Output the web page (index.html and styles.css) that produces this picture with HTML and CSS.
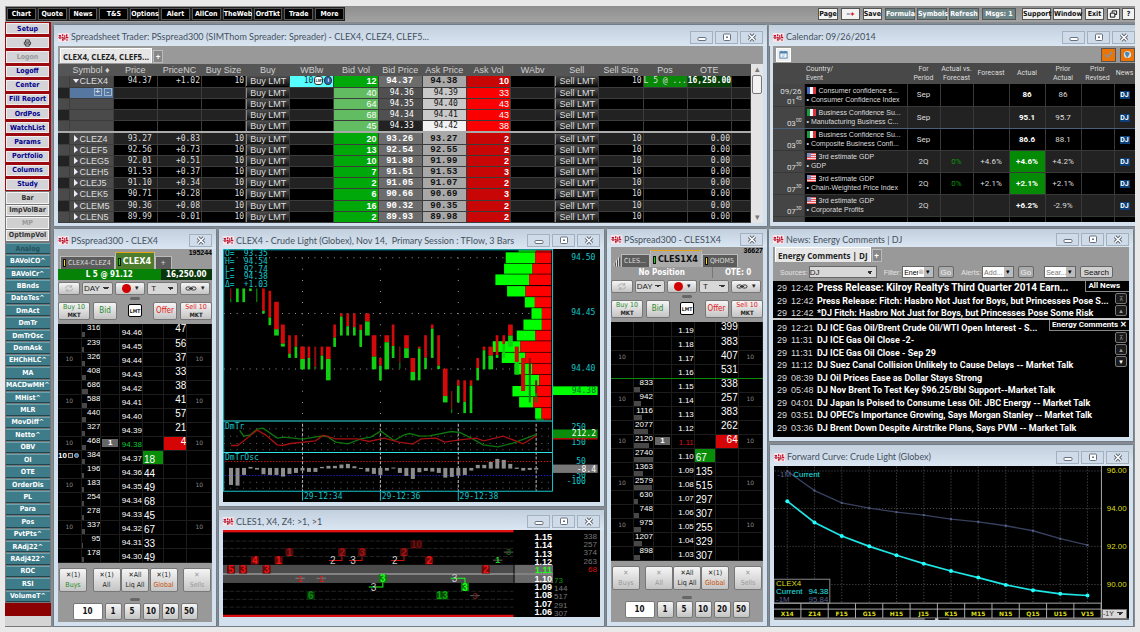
FILE: index.html
```html
<!DOCTYPE html>
<html lang="en">
<head>
  <meta charset="UTF-8">
  <meta name="viewport" content="width=device-width, initial-scale=1.0">
  <title>Trading Desktop</title>
  <link rel="stylesheet" href="styles.css">
</head>
<body>

<!-- Shared icons -->
<svg class="defs" width="0" height="0" aria-hidden="true">
  <symbol id="logo" viewBox="0 0 33 27">
    <rect width="33" height="27" fill="#f4e4e8"/>
    <path fill="#c8102e" d="M2 6h7v4H2zM1 13h9v4H3v-2H1zM12 4h4v5h-4zM11 11h5v4h-5zM12 18h5v5h-5zM18 7h4v4h-4zM17 13h6v4h-6zM24 4h4v6h-4zM24 12h7v4h-7zM25 19h4v4h-4z"/>
    <path fill="#7d0a1e" d="M4 9h4v2H4zM13 14h4v3h-4zM19 17h3v3h-3zM25 9h3v2h-3z"/>
  </symbol>
  <symbol id="min" viewBox="0 0 12 9"><rect x="2" y="4.500" width="8" height="3" rx="1" fill="#fff" stroke="#66717d"/></symbol>
  <symbol id="max" viewBox="0 0 12 9"><rect x="2.500" y="1" width="7" height="6.500" rx="1" fill="#fff" stroke="#66717d"/><rect x="5" y="3.500" width="2" height="1.500" fill="#66717d"/></symbol>
  <symbol id="close" viewBox="0 0 12 9"><path d="M3 1.500 9 7.500M9 1.500 3 7.500" stroke="#5d6874" stroke-width="3.400"/><path d="M3 1.500 9 7.500M9 1.500 3 7.500" stroke="#fff" stroke-width="1.500"/></symbol>
  <symbol id="link" viewBox="0 0 12 6"><rect x="1" y="1.500" width="5" height="3" rx="1.500" fill="none" stroke="#333"/><rect x="6" y="1.500" width="5" height="3" rx="1.500" fill="none" stroke="#333"/><path d="M4 3h4" stroke="#333"/></symbol>
  <symbol id="cycle" viewBox="0 0 12 10"><path d="M2 5a4 3 0 0 1 7-2M10 5a4 3 0 0 1-7 2M9 1v2.500H6.500M3 9V6.500h2.500" fill="none" stroke="#aaa"/></symbol>
</svg>

<div class="app">
  <header class="toolbar">
    <nav class="menu">
      <button>Chart</button><button>Quote</button><button>News</button><button>T&amp;S</button><button>Options</button><button>Alert</button><button>AllCon</button><button>TheWeb</button><button>OrdTkt</button><button>Trade</button><button>More</button>
    </nav>
    <div class="actions">
      <button>Page</button>
      <button class="page-nav" aria-label="Next page"><svg viewBox="0 0 12 6"><path d="M1 3h4" stroke="#228"/><path d="M6 3h5M8.500 1v4" stroke="#c11" stroke-width="1.500"/></svg></button>
      <button>Save</button>
      <span class="group"><button class="teal">Formula</button><button class="teal">Symbols</button><button class="teal">Refresh</button></span>
      <button class="teal msgs">Msgs: 1</button>
      <span class="group wide"><button>Support</button><button>Window</button></span>
      <button>Exit</button>
      <span class="group"><button class="sq" aria-label="Restore"><svg viewBox="0 0 9 9"><path d="M3 3V1h5v4H6M1 3.500h5V8H1z" fill="none" stroke="#000"/></svg></button><button class="sq">?</button></span>
    </div>
  </header>

  <div class="main">
    <aside class="sidebar">
      <div class="side-red">
        <button>Setup</button>
        <button aria-label="Print"><svg viewBox="0 0 10 9"><path d="M3 3.500V1h4v2.500M3 6H1.500V3.500h7V6H7M3 5.500h4V8H3z" fill="none" stroke="#333"/></svg></button>
        <button disabled>Logon</button>
        <button>Logoff</button>
        <button>Center</button>
        <button>Fill Report</button>
        <button>OrdPos</button>
        <button>WatchList</button>
        <button>Params</button>
        <button>Portfolio</button>
        <button>Columns</button>
        <button>Study</button>
      </div>
      <div class="side-gray">
        <button>Bar</button>
        <button>ImpVolBar</button>
        <button disabled>MP</button>
        <button>OptImpVol</button>
      </div>
      <div class="side-teal" id="studies"></div>
      <div class="side-end"></div>
    </aside>

    <div class="desk">
      <div class="desk-left">
        <section class="win sheet-win">
          <div class="title"><svg class="logo"><use href="#logo"/></svg><h2>Spreadsheet Trader: PSspread300 (SIMThom Spreader: Spreader) - CLEX4, CLEZ4, CLEF5...</h2><div class="ctl"><button aria-label="Minimize"><svg><use href="#min"/></svg></button><button aria-label="Maximize"><svg><use href="#max"/></svg></button><button aria-label="Close"><svg><use href="#close"/></svg></button></div></div>
          <div class="body">
            <div class="tabs"><button class="tab on">CLEX4, CLEZ4, CLEF5...</button><button class="plus">+</button></div>
            <div class="sheet-wrap">
              <table class="sheet">
                <colgroup><col class="c-gut"><col span="15"><col class="c-end"></colgroup>
                <thead><tr><th></th><th>Symbol ♦</th><th>Price</th><th>PriceNC</th><th>Buy Size</th><th>Buy</th><th>WBlw</th><th>Bid Vol</th><th>Bid Price</th><th>Ask Price</th><th>Ask Vol</th><th>WAbv</th><th>Sell</th><th>Sell Size</th><th>Pos</th><th>OTE</th><th></th></tr></thead>
                <tbody id="sheetRows"></tbody>
              </table>
              <div class="scroll"><span>▴</span><i></i><span>▾</span></div>
            </div>
          </div>
        </section>

        <div class="lower">
          <section class="win ladder-win" id="ladder1">
            <div class="title"><svg class="logo"><use href="#logo"/></svg><h2>PSspread300 - CLEX4</h2><div class="ctl"><button aria-label="Close"><svg><use href="#close"/></svg></button></div></div>
            <div class="body">
              <div class="ltabs">
                <button class="ltab"><i class="mark yellow"></i>CLEX4-CLEZ4</button>
                <button class="ltab on"><i class="mark green"></i>CLEX4</button>
                <button class="ltab add">+</button>
                <span class="count">195244</span>
              </div>
              <div class="pos long"><span>L 5 @ 91.12</span><span>16,250.00</span></div>
              <div class="controls"></div>
            </div>
          </section>

          <div class="mid">
            <section class="win chart-win">
              <div class="title"><svg class="logo"><use href="#logo"/></svg><h2>CLEX4 - Crude Light (Globex), Nov 14,&nbsp; Primary Session : TFlow, 3 Bars</h2><div class="ctl"><button aria-label="Minimize"><svg><use href="#min"/></svg></button><button aria-label="Maximize"><svg><use href="#max"/></svg></button><button aria-label="Close"><svg><use href="#close"/></svg></button></div></div>
              <div class="body"><svg class="plot" id="barChart" viewBox="18 62 1128 758"></svg></div>
            </section>
            <section class="win tape-win">
              <div class="title"><svg class="logo"><use href="#logo"/></svg><h2>CLES1, X4, Z4: &gt;1, &gt;1</h2><div class="ctl"><button aria-label="Minimize"><svg><use href="#min"/></svg></button><button aria-label="Maximize"><svg><use href="#max"/></svg></button><button aria-label="Close"><svg><use href="#close"/></svg></button></div></div>
              <div class="body"><svg class="plot" id="tape" viewBox="18 70 1125 260"></svg></div>
            </section>
          </div>

          <section class="win ladder-win compact" id="ladder2">
            <div class="title"><svg class="logo"><use href="#logo"/></svg><h2>PSspread300 - CLES1X4</h2><div class="ctl"><button aria-label="Close"><svg><use href="#close"/></svg></button></div></div>
            <div class="body">
              <div class="ltabs">
                <svg class="steps" viewBox="0 0 9 12"><path d="M1.500 12V8M4 12V5M6.500 12V2" stroke="#fff"/><path d="M2.500 12V8M5 12V5M7.500 12V2" stroke="#333"/></svg>
                <button class="ltab">CLES...</button>
                <button class="ltab on gray"><i class="mark green"></i>CLES1X4</button>
                <button class="ltab"><i class="mark yellow"></i>QHOM5</button>
                <span class="count">36627</span>
              </div>
              <div class="pos flat"><span>No Position</span><span>OTE: 0</span></div>
              <div class="controls"></div>
            </div>
          </section>
        </div>
      </div>

      <div class="desk-right">
        <section class="win cal-win">
          <div class="title"><svg class="logo"><use href="#logo"/></svg><h2>Calendar: 09/26/2014</h2><div class="ctl"><button aria-label="Minimize"><svg><use href="#min"/></svg></button><button aria-label="Maximize"><svg><use href="#max"/></svg></button><button aria-label="Close"><svg><use href="#close"/></svg></button></div></div>
          <div class="body">
            <div class="cal-bar">
              <button aria-label="Pick date"><svg viewBox="0 0 10 10"><rect x="1" y="2" width="8" height="7" fill="#fff" stroke="#4a7fae"/><path d="M1 3h8M3 1v1M7 1v1" stroke="#4a7fae" stroke-width="2"/><path d="M3 5.500h4M3 7.500h3" stroke="#8fb2cf"/></svg></button>
              <button class="orange push" aria-label="Importance"><svg viewBox="0 0 10 10"><path d="M1 5l3 3 5-6" fill="none" stroke="#8a9098" stroke-width="2"/></svg></button>
              <button class="orange" aria-label="Countries"><svg viewBox="0 0 10 10"><circle cx="5" cy="5" r="4" fill="#cfe3f2"/><path d="M3 2c3 0 5 1 4 3s-2 2-2 4C4 7 1 5 3 2z" fill="#4f86ad"/></svg></button>
            </div>
            <table class="cal">
              <colgroup><col class="k-time"><col class="k-event"><col class="k-33"><col class="k-33"><col class="k-36"><col class="k-36"><col class="k-36"><col class="k-33"><col class="k-news"></colgroup>
              <thead><tr><th></th><th class="left">Country/<br>Event</th><th>For<br>Period</th><th>Actual vs.<br>Forecast</th><th>Forecast</th><th>Actual</th><th>Prior<br>Actual</th><th>Prior<br>Revised</th><th>News</th></tr></thead>
              <tbody id="calRows"></tbody>
            </table>
          </div>
        </section>

        <section class="win news-win">
          <div class="title"><svg class="logo"><use href="#logo"/></svg><h2>News: Energy Comments | DJ</h2><div class="ctl"><button aria-label="Minimize"><svg><use href="#min"/></svg></button><button aria-label="Maximize"><svg><use href="#max"/></svg></button><button aria-label="Close"><svg><use href="#close"/></svg></button></div></div>
          <div class="body">
            <div class="tabs"><button class="tab on">Energy Comments | DJ</button><button class="plus">+</button></div>
            <div class="news-bar">
              <label for="src">Sources:</label><select id="src" class="w-src"><option>DJ</option></select>
              <label for="filter" class="sp">Filter:</label><span class="combo"><input id="filter" value="Ener"><em>⊗</em><button aria-label="Filter list">▾</button></span><button class="dim">Go</button>
              <label for="alerts" class="sp">Alerts:</label><span class="combo"><input id="alerts" placeholder="Add..."><button aria-label="Alert list">▾</button></span><button class="dim">Go</button>
              <span class="combo srch"><input aria-label="Search text" placeholder="Sear..."><button aria-label="Search list">▾</button></span><button>Search</button>
            </div>
            <div class="news-list top"><div id="newsTop"></div><b class="tag">All News</b><div class="jump"><button>⊼</button><button>▲</button></div></div>
            <div class="news-list all"><div id="newsAll"></div><b class="tag">Energy Comments ✕</b><div class="jump"><button>⊼</button><button>▲</button><button class="lit">▼</button></div></div>
          </div>
        </section>

        <section class="win fwd-win">
          <div class="title"><svg class="logo"><use href="#logo"/></svg><h2>Forward Curve: Crude Light (Globex)</h2><div class="ctl"><button aria-label="Minimize"><svg><use href="#min"/></svg></button><button aria-label="Maximize"><svg><use href="#max"/></svg></button><button aria-label="Close"><svg><use href="#close"/></svg></button></div></div>
          <div class="body"><svg class="plot" id="forward" viewBox="26 76 1069 463"></svg><select class="span-pick" aria-label="Compare"><option>-1Y</option></select></div>
        </section>
      </div>
    </div>
  </div>
</div>

<script src="app.js"></script>
</body>
</html>
```
FILE: styles.css
```css
* {
  box-sizing: border-box;
}
body {
  margin: 0;
  padding: 6px 5px;
  background: #e9e9e9;
  font-family: "Liberation Sans", Arial, sans-serif;
  font-size: 9px;
  color: #ddd;
}
button, input, select {
  font: inherit;
  margin: 0;
  padding: 0;
  border-radius: 0;
  cursor: pointer;
}
table {
  border-collapse: collapse;
  table-layout: fixed;
  width: 100%;
}
td, th {
  padding: 0;
  font-weight: normal;
  white-space: nowrap;
  overflow: hidden;
}
.defs {
  position: absolute;
}
.app {
  overflow: hidden;
  background: #9b9b9b;
}

/* top toolbar */
.toolbar {
  display: flex;
  justify-content: space-between;
  align-items: center;
  height: 16px;
  padding-left: 2px;
  background: linear-gradient(#8f8f8f, #a2a2a2);
  font: bold 7px "DejaVu Sans Condensed", "DejaVu Sans", sans-serif;
}
.menu {
  display: flex;
  gap: 2px;
  width: 337px;
}
.menu button {
  flex: 1 1 0;
  min-width: 0;
  height: 12px;
  border: 1px solid #555;
  outline: 1px solid #222;
  background: #000;
  color: #fff;
}
.actions {
  display: flex;
  gap: 3px;
}
.actions .group {
  display: flex;
  gap: 2px;
}
.actions button {
  min-width: 19px;
  height: 12px;
  border: 1px solid #555;
  background: #f2f2f2;
  color: #111;
}
.actions .teal {
  width: 30px;
  background: #6d8486;
  color: #fff;
}
.actions .msgs {
  width: 34px;
  margin-right: 3px;
}
.actions .wide button {
  width: 29px;
}
.actions .sq {
  min-width: 13px;
}
.actions svg {
  display: block;
  width: 9px;
  height: 8px;
  margin: auto;
}

.main {
  display: flex;
}

/* study / command buttons */
.sidebar {
  flex: none;
  width: 46px;
  background: #777;
  font: bold 7px "DejaVu Sans Condensed", "DejaVu Sans", sans-serif;
}
.sidebar button {
  width: 100%;
  min-height: 0;
  line-height: 8px;
  white-space: nowrap;
}
.sidebar svg {
  display: block;
  height: 8px;
  margin: auto;
}
.side-red, .side-gray, .side-teal {
  display: grid;
  grid-auto-rows: minmax(0, 1fr);
  padding: 1px 2px 1px 1px;
}
.side-red {
  gap: 3px;
  height: 169px;
  background: #9c0a0f;
}
.side-red button {
  border: 1px solid #eee;
  background: #d3d3d8;
  color: #00008b;
}
.side-gray {
  gap: 1px;
  height: 51px;
}
.side-gray button {
  border: 1px solid #f4f4f4;
  background: #d0d0d0;
  color: #333;
}
.sidebar button:disabled {
  color: #999;
  cursor: default;
}
.side-teal {
  gap: 1px;
  height: 361px;
}
.side-teal button {
  border: 1px solid #6ba3af;
  border-width: 1px 0;
  border-bottom-color: #1f4650;
  background: #3e7c8a;
  color: #fff;
}
.side-teal button:disabled {
  color: #24505b;
}
.side-end {
  height: 23px;
  border-bottom: 10px solid #d4d4d4;
  background: #8b0000;
}

/* desktop and windows */
.desk {
  flex: 1;
  display: grid;
  grid-template-columns: minmax(0, 715fr) minmax(0, 366fr);
  gap: 1px;
  padding: 2px 0 0 2px;
  overflow: hidden;
  background: #858b90;
}
.desk-left, .desk-right, .mid {
  display: flex;
  flex-direction: column;
  min-width: 0;
}
.lower {
  flex: 1;
  display: grid;
  grid-template-columns: 164px minmax(0, 1fr) 162px;
  gap: 1px;
  margin-top: 1px;
}
.mid {
  gap: 2px;
}
.win {
  display: flex;
  flex-direction: column;
  min-width: 0;
  padding: 0 4px 4px;
  border: 1px solid #737d87;
  border-radius: 3px 3px 0 0;
  background: #d3e0ee;
}
.title {
  display: flex;
  align-items: center;
  gap: 2px;
  flex: none;
  height: 21px;
  margin: 0 -4px;
  padding: 3px 4px 0;
  background: linear-gradient(#c2cfdd, #dae6f2);
}
.ladder-win .title, .chart-win .title, .tape-win .title {
  height: 20px;
}
.compact .title {
  height: 18px;
}
.title .logo {
  flex: none;
  width: 11px;
  height: 9px;
}
.title h2 {
  flex: 1;
  margin: 0;
  overflow: hidden;
  font: 9px Lato, sans-serif;
  line-height: 12px;
  color: #44505e;
  white-space: nowrap;
}
.ctl {
  display: flex;
  gap: 2px;
}
.ctl button {
  width: 23px;
  height: 13px;
  border: 1px solid #a3b0be;
  background: #cfdbe8;
}
.ctl svg {
  display: block;
  width: 12px;
  height: 9px;
  margin: auto;
}
.body {
  flex: 1;
  min-height: 0;
  background: #999;
}
.plot {
  display: block;
  width: 100%;
  background: #000;
}

.tabs {
  display: flex;
  align-items: flex-end;
  height: 18px;
  padding: 0 0 1px 2px;
  font: bold 8px "Open Sans", sans-serif;
}
.tabs .tab {
  height: 15px;
  padding: 0 2px;
  border: 1px solid #fff;
  border-bottom: 0;
  background: #e6e6e6;
  color: #222;
}
.tabs .plus {
  width: 10px;
  height: 13px;
  margin-left: 1px;
  border: 1px solid #bbb;
  background: #888;
  color: #fff;
}

/* spreadsheet */
.sheet-win {
  height: 203px;
}
.sheet-wrap {
  display: flex;
}
.sheet {
  height: 159px;
  background: #000;
}
.c-gut {
  width: 11px;
}
.c-end {
  width: 19px;
}
.sheet th {
  height: 12px;
  background: #555;
  color: #d0d0d0;
}
.sheet td {
  height: 11px;
  padding-right: 1px;
  border: 1px solid #3c3c3c;
  border-width: 0 1px 1px 0;
  font: 8px "DejaVu Sans Mono", monospace;
  line-height: 10px;
  text-align: right;
}
.sheet tr:nth-child(even) td {
  background: #222;
}
.sheet tr.last td {
  border-bottom: 2px solid #aaa;
}
.sheet td.gut, .sheet tr td.sym {
  background: #4a4a4a;
}
.sheet td.sym {
  padding-left: 3px;
  font: 9px "Liberation Sans", sans-serif;
  line-height: 10px;
  text-align: left;
}
.sym svg {
  width: 6px;
  height: 7px;
  margin-right: 1px;
}
.sheet tr td.pick {
  background: #56779f;
  text-align: right;
}
.pick b {
  display: inline-block;
  width: 8px;
  margin-left: 2px;
  border: 1px solid #9db7d3;
  font-size: 8px;
  line-height: 6px;
  text-align: center;
  vertical-align: top;
}
.sheet td.act {
  padding: 0;
}
.act button {
  display: block;
  width: 100%;
  height: 10px;
  border: 0;
  border-left: 1px solid #888;
  background: linear-gradient(#4d4d4d, #111);
  color: #ddd;
  font: 9px "Liberation Sans", sans-serif;
  line-height: 10px;
}
.sheet tr td.work {
  background: #5ff;
  color: #134;
}
.work i {
  display: inline-block;
  width: 9px;
  height: 9px;
  margin-left: 1px;
  border: 1px solid #333;
  border-radius: 3px;
  background: #fff;
  font: bold 4px "Liberation Sans", sans-serif;
  line-height: 7px;
  text-align: center;
  vertical-align: top;
}
.work i + i {
  width: 8px;
  border-radius: 50%;
  background: #2a66ad;
  color: #fff;
  font-size: 6px;
}
.sheet tr td.bv, .sheet tr td.av {
  background: #00a80a;
  color: #fff;
  font: bold 9px "Liberation Sans", sans-serif;
  line-height: 10px;
}
.sheet tr td.av {
  background: #c80606;
}
.sheet tr.depth td.bv {
  background: #62bd62;
  font-weight: normal;
}
.sheet tr.depth td.av {
  background: #fa0000;
  font-weight: normal;
}
.sheet tr td.bp, .sheet tr td.ap {
  background: #6c6c6c;
  color: #fff;
  font: bold 9px "Liberation Mono", monospace;
  line-height: 10px;
  text-align: center;
}
.sheet tr td.ap {
  background: #a8a8a8;
  color: #111;
}
.sheet tr.depth td.bp, .sheet tr.depth td.ap {
  padding-left: 4px;
  font: 8px "DejaVu Sans Mono", monospace;
  line-height: 10px;
}
.sheet tr.depth td.ap {
  background: #c9c9c9;
}
.sheet tr.last td.ap {
  background: #f2f2f2;
}
.sheet tr.depth td.bp {
  background: #505050;
}
.sheet tr.last td.bp {
  background: #222;
}
.sheet tr td.plong {
  padding: 0;
  background: #078807;
  text-align: left;
}
.sheet tr td.gain {
  padding: 0;
  background: #064006;
  color: #fff;
  font-weight: bold;
}
.sheet td.price {
  padding-right: 5px;
}
.scroll {
  display: flex;
  flex-direction: column;
  align-items: center;
  flex: none;
  width: 12px;
  background: #e4e4e4;
  color: #777;
  line-height: 11px;
}
.scroll i {
  width: 10px;
  height: 19px;
  border: 1px solid #777;
  border-radius: 2px;
  background: #f2f2f2;
}
.scroll span:last-child {
  margin-top: auto;
}

/* price ladders */
.ltabs {
  display: flex;
  align-items: flex-end;
  height: 20px;
  padding-left: 2px;
  font: 8px "DejaVu Sans Condensed", "DejaVu Sans", sans-serif;
}
.ltab {
  height: 13px;
  padding: 0 3px 0 2px;
  border: 1px solid #bbb;
  border-bottom: 0;
  background: #5c5c5c;
  color: #ddd;
  font-size: 7px;
  white-space: nowrap;
}
.ltab.add {
  width: 17px;
}
.ltab.on {
  height: 17px;
  border-top: 1px solid #e6a317;
  background: #4c7c2c;
  color: #fff;
  font-size: 9px;
  font-weight: bold;
}
.ltab.on.gray {
  background: #ababab;
  color: #111;
}
.mark {
  display: inline-block;
  width: 3px;
  height: 8px;
  margin-right: 2px;
  border: 1px solid #111;
  background: #fd0;
  vertical-align: middle;
}
.mark.green {
  background: #0d0;
}
.steps {
  width: 8px;
  height: 12px;
}
.count {
  align-self: flex-start;
  flex: 1;
  color: #000;
  font: bold 7px "Liberation Sans", sans-serif;
  text-align: right;
}
.pos {
  display: grid;
  grid-template-columns: 2fr 1fr;
  height: 11px;
  color: #fff;
  font: bold 8px "DejaVu Sans Condensed", "DejaVu Sans", sans-serif;
  line-height: 11px;
  text-align: center;
  white-space: nowrap;
}
.pos.long span {
  background: #068206;
}
.pos.long span + span {
  background: #0b360b;
}
.pos.flat span + span {
  border-left: 1px solid #777;
}
.tools, .orders, .cancels, .sizes {
  display: flex;
  align-items: center;
}
.tools {
  gap: 2px;
  height: 16px;
}
.controls button, .controls select, .controls input {
  border: 1px solid #777;
  border-radius: 2px;
  background: linear-gradient(#f5f5f5, #c4c4c4);
  color: #222;
}
.tools button, .tools select {
  flex: 28 1 0;
  min-width: 0;
  height: 13px;
  font-size: 8px;
}
.tools button {
  display: flex;
  align-items: center;
  justify-content: center;
}
.tools select {
  padding-left: 1px;
}
.tools .small {
  flex-grow: 20;
}
.tools svg {
  width: 12px;
  height: 9px;
}
.rec {
  width: 9px;
  height: 9px;
  border-radius: 50%;
  background: #d00000;
}
.tools small {
  margin-left: 4px;
  color: #222;
  font-size: 7px;
  line-height: 8px;
}
.grip {
  width: 10px;
  height: 3px;
  margin: 1px auto 0;
  border-radius: 2px;
  background: #666;
}
.orders {
  justify-content: space-between;
  height: 24px;
  padding-bottom: 3px;
}
.orders button {
  width: 24px;
  height: 18px;
  font: 8px "DejaVu Sans Condensed", "DejaVu Sans", sans-serif;
  line-height: 8px;
}
.orders .mkt {
  width: 32px;
  font-size: 7px;
  line-height: 7px;
}
.mkt span, .cancels span {
  display: block;
  color: #222;
}
.mkt span {
  font-size: 6px;
  font-weight: bold;
}
.controls .buy {
  color: #2b8a2b;
}
.controls .sell {
  color: #e02020;
}
.controls .lmt {
  width: 14px;
  height: 13px;
  margin: 0 8px;
  border-color: #000;
  background: #fff;
  font: bold 5px "DejaVu Sans Condensed", "DejaVu Sans", sans-serif;
}
.ladder {
  background: #000;
  color: #fff;
  font-weight: bold;
}
.ladder td {
  height: 14px;
  border: 1px solid #1c1c1c;
  border-width: 0 1px 1px 0;
  line-height: 11px;
  vertical-align: top;
}
.ladder tr.split td {
  border-bottom-color: #0b8a0b;
}
.ladder .lot {
  color: #888;
  font: 6px "DejaVu Sans", sans-serif;
  line-height: 12px;
  text-align: center;
  vertical-align: middle;
}
.ladder .own {
  color: #fff;
  font: bold 8px "Liberation Sans", sans-serif;
  line-height: 10px;
}
.own i {
  display: inline-block;
  width: 5px;
  height: 5px;
  margin-left: 1px;
  border: 1px solid #aaa;
  background: #222;
}
.own i + i {
  border-radius: 50%;
  background: #2a76bd;
}
.ladder .vol {
  font-size: 8px;
  line-height: 8px;
  text-align: right;
}
.vol i {
  display: block;
  height: 5px;
  background: #484848;
}
.ladder .px {
  font-size: 8px;
  line-height: 11px;
  text-align: right;
  vertical-align: bottom;
}
.ladder .bid {
  padding-left: 1px;
  vertical-align: bottom;
  font-size: 10px;
  line-height: 9px;
}
.ladder .ask {
  font-size: 10px;
  line-height: 9px;
  text-align: right;
}
.ladder .best-bid {
  background: #078d07;
}
.ladder .best-ask {
  background: #d50505;
}
.px.up {
  color: #0c3;
}
.px.down {
  color: #d11;
}
.mine b {
  display: block;
  height: 8px;
  margin: 2px 1px 0;
  background: #666;
  font-size: 8px;
  line-height: 8px;
  text-align: center;
}
.cancels {
  justify-content: space-between;
  height: 34px;
  padding: 0 1px;
}
.cancels button {
  width: 28px;
  height: 24px;
  font: 7px "DejaVu Sans Condensed", "DejaVu Sans", sans-serif;
  line-height: 10px;
}
.cancels .tail {
  margin-left: -5px;
}
.cancels .global {
  color: #c8500a;
}
.cancels button:disabled, .cancels button:disabled span {
  color: #999;
}
.sizes {
  justify-content: center;
  gap: 2px;
  height: 21px;
}
.controls .sizes button, .controls .sizes input {
  width: 17px;
  height: 17px;
  color: #111;
  font: bold 8px "DejaVu Sans Condensed", "DejaVu Sans", sans-serif;
  text-align: center;
}
.controls .sizes input {
  width: 30px;
  background: #fff;
}

/* the tape window takes what is left under the chart */
.tape-win {
  flex: 1;
}
.tape-win .body, .fwd-win .body {
  flex: none;
}

/* calendar */
.cal-win {
  height: 203px;
  margin-right: -5px;
  padding-left: 3px;
}
.cal-win .body {
  overflow: hidden;
}
.cal-bar {
  display: flex;
  align-items: center;
  gap: 4px;
  height: 17px;
  padding-left: 3px;
}
.cal-bar button {
  width: 15px;
  height: 14px;
  border: 1px solid #fff;
  background: #eee;
}
.cal-bar .orange {
  border-color: #555;
  background: #ec7404;
}
.cal-bar .push {
  margin-left: auto;
}
.cal-bar svg {
  display: block;
  width: 9px;
  height: 9px;
  margin: auto;
}
.cal {
  background: #000;
  font: 8px Roboto, sans-serif;
}
.k-time { width: 31px; }
.k-event { width: 103px; }
.k-33 { width: 33px; }
.k-36 { width: 36px; }
.k-news { width: 21px; }
.cal th {
  height: 21px;
  background: #484848;
  font-size: 7px;
  line-height: 9px;
}
.cal .left, .cal td.event {
  padding-left: 2px;
  text-align: left;
}
.cal td {
  height: 22px;
  border: 1px solid #383838;
  border-width: 0 1px 1px 0;
  line-height: 9px;
  text-align: center;
}
.cal td.event {
  font: 7px "Liberation Sans", sans-serif;
  line-height: 9px;
}
.cal tr.alt td {
  background: #222;
}
.cal tr.sel td {
  border-top: 1px solid #49607a;
  border-bottom: 1px solid #49607a;
}
.cal tr td.time {
  padding-right: 2px;
  background: #454545;
  text-align: right;
  vertical-align: bottom;
}
.time sup {
  font-size: 5px;
  line-height: 5px;
}
.flag {
  display: inline-block;
  width: 9px;
  height: 7px;
  margin-right: 3px;
  vertical-align: -1px;
}
.flag.fr {
  background: linear-gradient(90deg, #4668c4 33%, #fff 33% 66%, #e0343a 66%);
}
.flag.it {
  background: linear-gradient(90deg, #1a9a40 33%, #fff 33% 66%, #e0343a 66%);
}
.flag.us {
  background: linear-gradient(90deg, #7d8dc0 45%, transparent 45%) 0 0 / 100% 4px no-repeat, repeating-linear-gradient(#e0565a 0 1px, #f6dcdc 1px 2px);
}
.cal .zero {
  color: #0a9a0a;
}
.cal .act {
  color: #fff;
  font-weight: bold;
}
.cal tr td.hot {
  background: #058a05;
}
.dj {
  display: inline-block;
  width: 10px;
  background: #0a3f78;
  color: #fff;
  font-size: 7px;
  font-weight: bold;
  line-height: 8px;
}

/* news */
.news-win {
  margin: 1px 1px 0 -1px;
  height: 214px;
}
.news-win .title {
  height: 18px;
}
.news-win .body {
  display: flex;
  flex-direction: column;
}
.news-win .tabs {
  height: 16px;
}
.news-bar {
  display: flex;
  align-items: center;
  gap: 4px;
  height: 18px;
  padding: 0 16px 0 7px;
  font-size: 8px;
}
.news-bar label {
  margin-right: -3px;
  color: #e4e4e4;
  font-size: 7px;
}
.news-bar .sp {
  margin-left: 3px;
}
.news-bar > button {
  height: 12px;
  padding: 0 3px;
  border: 1px solid #666;
  border-radius: 2px;
  background: #cfcfcf;
  color: #111;
}
.news-bar > .dim {
  padding: 0 2px;
  background: #aaa;
  color: #eee;
}
.news-bar select {
  height: 12px;
  border: 1px solid #666;
  background: #c6c6c6;
  color: #222;
}
.w-src {
  width: 68px;
}
.combo {
  display: flex;
  flex: 1;
  align-items: center;
  height: 12px;
  min-width: 0;
  border: 1px solid #666;
  background: #fff;
  color: #999;
}
.combo.srch {
  margin-left: 6px;
}
.combo input {
  flex: 1;
  min-width: 0;
  width: 10px;
  border: 0;
  padding-left: 1px;
  background: #fff;
  font-size: 7px;
}
.combo em {
  font-style: normal;
  font-size: 7px;
}
.combo button {
  flex: none;
  width: 9px;
  height: 10px;
  border: 0;
  background: #bbb;
  font-size: 7px;
  line-height: 8px;
}
.news-list {
  position: relative;
  background: #000;
  overflow: hidden;
}
.news-list.top {
  height: 39px;
  border-bottom: 2px solid #ccc;
}
.news-list.all {
  flex: 1;
  padding-top: 1px;
}
.all > div:first-child {
  display: grid;
  grid-auto-rows: minmax(0, 1fr);
  height: 112px;
}
.story {
  display: grid;
  grid-template-columns: 14px 26px minmax(0, 1fr);
  height: 12px;
  padding-left: 4px;
  line-height: 14px;
  white-space: nowrap;
}
.story a {
  color: #fff;
  font-family: Roboto, sans-serif;
  font-weight: bold;
  text-decoration: none;
}
.story.big {
  height: 13px;
}
.story.big a {
  font-size: 10px;
}
.tag {
  position: absolute;
  top: 0;
  right: 0;
  padding: 0 2px 1px;
  border: 1px solid #888;
  border-width: 0 0 1px 1px;
  background: #000;
  color: #fff;
  font: bold 8px Roboto, sans-serif;
  line-height: 9px;
}
.top .tag {
  padding-right: 9px;
}
.jump {
  position: absolute;
  top: 12px;
  right: 2px;
  display: grid;
  gap: 1px;
}
.jump button {
  width: 12px;
  height: 11px;
  border: 1px solid #777;
  border-radius: 2px;
  background: #1a1a1a;
  color: #999;
  font-size: 6px;
  line-height: 8px;
}
.jump .lit {
  color: #fff;
}

/* forward curve */
.fwd-win {
  flex: 1;
  margin: 2px 1px 0 0;
}
.fwd-win .body {
  position: relative;
}
.span-pick {
  position: absolute;
  right: 2px;
  bottom: 1px;
  width: 25px;
  height: 10px;
  border: 1px solid #777;
  background: #ccc;
  color: #333;
  font-size: 7px;
}

/* drop-down arrow */
select {
  appearance: none;
  text-align: left;
}
.controls select, .news-bar select, .span-pick {
  background-image: linear-gradient(45deg, transparent 50%, #333 50%), linear-gradient(-45deg, transparent 50%, #333 50%);
  background-position: right 6px center, right 3px center;
  background-size: 3px 3px;
  background-repeat: no-repeat;
  background-color: #d8d8d8;
}

/* chart text, drawn in thirds of a pixel */
.plot text {
  font: 24px "DejaVu Sans Mono", monospace;
}
.plot .sans {
  font-family: "Liberation Sans", sans-serif;
}
.plot .med {
  font-family: "Liberation Sans", sans-serif;
  font-size: 27px;
  font-weight: bold;
}
.plot .thin, .plot .num {
  font-family: "Liberation Sans", sans-serif;
  font-size: 30px;
}
.plot .num {
  font-weight: bold;
}
.plot .month {
  font: bold 18px "DejaVu Sans", sans-serif;
}
```
FILE: app.js
```js
const byId = id => document.getElementById(id);

// Sidebar studies
const studies = ['Analog', 'BAVolCO^', 'BAVolCr^', 'BBnds', 'DateTes^', 'DmAct', 'DmTr', 'DmTrOsc', 'DomAsk', 'EHChHLC^', 'MA', 'MACDwMH^', 'MHist^', 'MLR', 'MovDiff^', 'Netto^', 'OBV', 'OI', 'OTE', 'OrderDis', 'PL', 'Para', 'Pos', 'PvtPts^', 'RAdj22^', 'RAdj422^', 'ROC', 'RSI', 'VolumeT^'];
byId('studies').innerHTML = studies.map((s, i) => `<button${i === 0 ? ' disabled' : ''}>${s}</button>`).join('');

// Spreadsheet: symbol, price, change, bid vol, bid, ask, ask vol
const quotes = [
  ['CLEX4', '94.37', '+1.02', 12, '94.37', '94.38', 10],
  ['', '', '', 40, '94.36', '94.39', 33],
  ['', '', '', 64, '94.35', '94.40', 43],
  ['', '', '', 68, '94.34', '94.41', 43],
  ['', '', '', 45, '94.33', '94.42', 38],
  ['CLEZ4', '93.27', '+0.83', 20, '93.26', '93.27', 2],
  ['CLEF5', '92.56', '+0.73', 13, '92.54', '92.55', 2],
  ['CLEG5', '92.01', '+0.51', 10, '91.98', '91.99', 2],
  ['CLEH5', '91.53', '+0.37', 7, '91.51', '91.53', 3],
  ['CLEJ5', '91.10', '+0.34', 2, '91.05', '91.07', 2],
  ['CLEK5', '90.71', '+0.28', 6, '90.66', '90.69', 3],
  ['CLEM5', '90.36', '+0.08', 16, '90.32', '90.35', 2],
  ['CLEN5', '89.99', '-0.01', 2, '89.93', '89.98', 2]
];
const openMark = '<svg viewBox="0 0 6 7"><path d="M0 2h6L3 6z" fill="#eee"/></svg>';
const closedMark = '<svg viewBox="0 0 6 7"><path d="M1 0v7l4-3z" fill="#eee"/></svg>';
byId('sheetRows').innerHTML = quotes.map((q, i) => {
  const depth = q[0] === '';
  const size = depth ? '' : 10;
  const sym = i === 1
    ? '<td class="sym pick"><b>+</b><b>-</b></td>'
    : `<td class="sym">${depth ? '' : (i === 0 ? openMark : closedMark) + q[0]}</td>`;
  return `<tr class="${depth ? 'depth' : ''}${i === 4 ? ' last' : ''}"><td class="gut"></td>${sym}
    <td class="price">${q[1]}</td><td>${q[2]}</td><td>${size}</td>
    <td class="act"><button>Buy LMT</button></td>
    ${i === 0 ? '<td class="work">10<i>LMT</i><i>i</i></td>' : '<td></td>'}
    <td class="bv">${q[3]}</td><td class="bp">${q[4]}</td><td class="ap">${q[5]}</td><td class="av">${q[6]}</td>
    <td></td><td class="act"><button>Sell LMT</button></td><td>${size}</td>
    ${i === 0 ? '<td class="plong">L 5 @ ...</td><td class="gain">16,250.00</td>' : `<td></td><td>${depth ? '' : '0.00'}</td>`}
    <td></td></tr>`;
}).join('');

// Calendar
const events = [
  ['01', '45', 'fr', 'Consumer confidence s...', 'Consumer Confidence Index', 'Sep', '', '', '86', '86', ''],
  ['03', '00', 'it', 'Business Confidence Su...', 'Manufacturing Business C...', 'Sep', '', '', '95.1', '95.7', 'alt sel'],
  ['03', '00', 'it', 'Business Confidence Su...', 'Composite Business Confi...', 'Sep', '', '', '86.6', '88.1', ''],
  ['07', '30', 'us', '3rd estimate GDP', 'GDP', '2Q', '0%', '+4.6%', '+4.6%', '+4.2%', 'alt'],
  ['07', '30', 'us', '3rd estimate GDP', 'Chain-Weighted Price Index', '2Q', '0%', '+2.1%', '+2.1%', '+2.1%', ''],
  ['07', '30', 'us', '3rd estimate GDP', 'Corporate Profits', '2Q', '', '', '+6.2%', '-2.9%', 'alt'],
  ['', '', 'us', '3rd estimate GDP', '', '', '', '', '', '', '']
];
byId('calRows').innerHTML = events.map((e, i) => `<tr class="${e[10]}">
  <td class="time">${i === 0 ? '09/26<br>' : ''}${e[0]}<sup>${e[1]}</sup></td>
  <td class="event"><i class="flag ${e[2]}"></i>${e[3]}<br>${e[4] && '• ' + e[4]}</td>
  <td>${e[5]}</td><td class="zero">${e[6]}</td><td>${e[7]}</td>
  <td class="act${e[6] ? ' hot' : ''}">${e[8]}</td><td>${e[9]}</td><td></td><td>${e[4] && '<span class="dj">DJ</span>'}</td></tr>`).join('');

// News
const story = ([time, text], big) => `<div class="story${big ? ' big' : ''}"><span>29</span><span>${time}</span><a href="#">${text}</a></div>`;
byId('newsTop').innerHTML = [
  ['12:42', "Press Release: Kilroy Realty's Third Quarter 2014 Earn..."],
  ['12:42', 'Press Release: Fitch: Hasbro Not Just for Boys, but Princesses Pose S...'],
  ['12:42', '*DJ Fitch: Hasbro Not Just for Boys, but Princesses Pose Some Risk']
].map((s, i) => story(s, i === 0)).join('');
byId('newsAll').innerHTML = [
  ['12:21', 'DJ ICE Gas Oil/Brent Crude Oil/WTI Open Interest - S...'],
  ['11:31', 'DJ ICE Gas Oil Close -2-'],
  ['11:31', 'DJ ICE Gas Oil Close - Sep 29'],
  ['11:12', 'DJ Suez Canal Collision Unlikely to Cause Delays -- Market Talk'],
  ['08:39', 'DJ Oil Prices Ease as Dollar Stays Strong'],
  ['05:48', 'DJ Nov Brent To Test Key $96.25/Bbl Support--Market Talk'],
  ['04:01', 'DJ Japan Is Poised to Consume Less Oil: JBC Energy -- Market Talk'],
  ['03:51', "DJ OPEC's Importance Growing, Says Morgan Stanley -- Market Talk"],
  ['03:36', 'DJ Brent Down Despite Airstrike Plans, Says PVM -- Market Talk']
].map(s => story(s)).join('');

// Price ladders
function buildLadder(id, o) {
  const rows = o.asks.concat(o.bids).map((size, i) => {
    const price = (o.top - i * 0.01).toFixed(2);
    const isBid = i >= o.asks.length;
    const bestAsk = i === o.asks.length - 1;
    const bestBid = i === o.asks.length;
    const lot = i % 3 === 2 ? 10 : '';
    const vol = o.vols[i];
    const bar = vol ? `${vol}<i style="width:${Math.round(vol / o.max * o.barWidth)}px"></i>` : '';
    return `<tr class="${i === o.split ? 'split' : ''}">
      ${bestBid && o.own ? '<td class="own">10<i></i><i></i></td>' : `<td class="lot">${lot}</td>`}
      <td class="vol">${bar}</td><td class="mine">${bestAsk ? '<b>1</b>' : ''}</td>
      <td class="px ${bestAsk ? o.last : ''}">${price}</td>
      <td class="bid ${bestBid ? 'best-bid' : ''}">${isBid ? size : ''}</td>
      <td class="ask ${bestAsk ? 'best-ask' : ''}">${isBid ? '' : size}</td>
      <td class="lot">${lot}</td></tr>`;
  }).join('');
  const off = o.flat ? 'disabled' : '';
  const n = o.flat ? '' : '(1)';
  document.querySelector(`#${id} .controls`).innerHTML = `
    <div class="tools">
      <button class="small" aria-label="Refresh"><svg><use href="#cycle"/></svg></button>
      <select aria-label="Duration"><option>DAY</option></select>
      <button aria-label="Record"><span class="rec"></span><small>▾</small></button>
      <select aria-label="Type"><option>&nbsp;T</option></select>
      <button aria-label="Link"><svg><use href="#link"/></svg><small>▾</small></button>
      <span></span>
    </div>
    <div class="grip"></div>
    <div class="orders">
      <button class="mkt buy">Buy 10<span>MKT</span></button><button class="buy">Bid</button>
      <button class="lmt">LMT</button>
      <button class="sell">Offer</button><button class="mkt sell">Sell 10<span>MKT</span></button>
    </div>
    <table class="ladder"><colgroup><col style="width:15%"><col style="width:13%"><col style="width:12%"><col style="width:15%"><col style="width:14%"><col style="width:15%"><col style="width:16%"></colgroup><tbody>${rows}</tbody></table>
    <div class="cancels">
      <button class="buy" ${off}><span>✕${n}</span>Buys</button>
      <button ${off}><span>✕${n}</span>All</button>
      <button class="tail"><span>✕All</span>Liq All</button>
      <button class="tail global"><span>✕(1)</span>Global</button>
      <button disabled><span>✕</span>Sells</button>
    </div>
    <div class="grip"></div>
    <div class="sizes"><input aria-label="Quantity" value="10"><button>1</button><button>5</button><button>10</button><button>20</button><button>50</button></div>`;
}
buildLadder('ladder1', {
  top: 94.46, asks: [47, 56, 37, 33, 38, 41, 57, 21, 4], bids: [18, 44, 49, 68, 45, 67, 33, 49],
  vols: [316, 239, 326, 408, 686, 588, 440, 327, 468, 384, 196, 183, 254, 278, 337, 95, 178],
  max: 686, barWidth: 6, last: 'up', own: true
});
buildLadder('ladder2', {
  top: 1.19, asks: [399, 383, 407, 531, 338, 257, 383, 262, 64], bids: [67, 135, 515, 297, 307, 255, 329, 307],
  vols: ['', '', '', '', 833, 942, 1116, 2077, 2120, 2740, 1363, 2579, 630, 748, 975, 1207, 898],
  max: 2740, barWidth: 19, last: 'down', split: 3, flat: true
});

// SVG helpers
const rect = (x, y, w, h, fill) => `<rect x="${x}" y="${y}" width="${w}" height="${h}" fill="${fill}"/>`;
const line = (x1, y1, x2, y2, stroke, extra = '') => `<path d="M${x1} ${y1}L${x2} ${y2}" stroke="${stroke}" ${extra || 'stroke-width="3"'}/>`;
const text = (x, y, s, fill, cls = '', extra = '') => `<text x="${x}" y="${y}" fill="${fill}" class="${cls}" ${extra}>${s}</text>`;
const poly = (pts, stroke, w) => `<polyline points="${pts}" fill="none" stroke="${stroke}" stroke-width="${w}"/>`;

// Bar chart: x, high, split, low, half width
function drawBars() {
  const cyan = '#16c5c9';
  let s = '';
  [88, 255, 421].forEach(y => { s += line(20, y, 1000, y, '#999', 'stroke-width="3" stroke-dasharray="3 16.400"'); });
  [256, 489, 722].forEach(x => {
    s += line(x, 88, x, 575, '#999', 'stroke-width="3" stroke-dasharray="3 30.200"');
    s += line(x, 585, x, 786, '#bbb', 'stroke-width="3" stroke-dasharray="9 5"');
  });
  s += line(955, 585, 955, 786, '#bbb', 'stroke-width="3" stroke-dasharray="9 5"');
  [600, 622, 644, 663, 760, 778].forEach(y => { s += line(20, y, 1000, y, '#666', 'stroke-width="3" stroke-dasharray="3 16.400"'); });

  // volume profile
  [[66, 72, 902, 954], [72, 106, 864, 952], [106, 138, 859, 944], [138, 172, 833, 934], [173, 206, 868, 923], [206, 239, 921, 951], [239, 273, 941, 972], [273, 306, 917, 972], [306, 338, 897, 953], [338, 372, 825, 908], [372, 405, 852, 922], [405, 439, 890, 944], [439, 472, 921, 964], [472, 505, 884, 957], [505, 538, 904, 946], [538, 572, 952, 971], [572, 576, 954, 978]].forEach(p => {
    s += rect(p[2], p[0], p[3] - p[2], p[1] - p[0] - 2, '#0f0') + rect(p[3], p[0], 1000 - p[3], p[1] - p[0] - 2, '#f00');
  });

  [[41, 180, 210, 221, 2], [61, 180, 180, 221, 4], [80, 180, 180, 221, 4], [100, 180, 180, 188, 4], [119, 180, 180, 221, 2], [139, 180, 247, 255, 4], [158, 187, 267, 290, 4], [178, 220, 302, 321, 7], [197, 288, 345, 354, 6], [217, 320, 375, 388, 4], [236, 320, 354, 388, 4], [256, 354, 391, 422, 7], [275, 354, 388, 422, 4], [294, 354, 415, 420, 3], [314, 354, 381, 422, 4], [333, 354, 391, 455, 7], [352, 288, 327, 355, 4], [372, 255, 264, 321, 4], [391, 255, 293, 321, 4], [411, 255, 296, 321, 4], [430, 288, 304, 355, 4], [450, 255, 279, 321, 7], [470, 320, 384, 422, 7], [489, 388, 411, 455, 4], [508, 320, 341, 422, 7], [527, 288, 352, 388, 4], [547, 354, 402, 420, 2], [567, 320, 359, 388, 7], [586, 388, 430, 455, 7], [605, 354, 360, 455, 4], [624, 320, 387, 421, 4], [644, 288, 300, 388, 4], [663, 320, 411, 421, 4], [683, 420, 502, 521, 7], [702, 487, 541, 553, 2], [722, 455, 471, 521, 4], [741, 455, 519, 553, 4], [760, 455, 471, 553, 4], [780, 388, 418, 455, 4], [799, 354, 365, 422, 4], [819, 354, 381, 422, 7], [838, 320, 379, 388, 4], [858, 320, 347, 388, 4], [878, 288, 321, 354, 7], [897, 354, 400, 438, 6], [916, 388, 487, 487, 6], [936, 388, 438, 521, 3], [955, 455, 493, 521, 3]].forEach(b => {
    const thin = b[4] < 4;
    s += rect(b[0] - b[4], b[1], b[4] * 2, b[2] - b[1], thin ? '#8c0d0d' : '#d40a0a');
    s += rect(b[0] - b[4], b[2], b[4] * 2, b[3] - b[2], thin ? '#0d7a0d' : '#12cf12');
  });

  [['O=', '93.35', 84], ['H=', '94.54', 107], ['L=', '92.74', 130], ['L=', '94.38', 152], ['Δ=', '+1.03', 175]].forEach(t => {
    s += text(24, t[2], t[0], cyan) + text(80, t[2], t[1], cyan);
  });

  // studies
  s += poly('68,605 80,622 100,618 120,601 138,598 180,628 200,625 256,631 310,622 330,623 355,640 392,645 430,630 460,625 490,607 530,635 560,618 576,614 606,622 636,621 701,608 726,611 761,628 796,648 841,654 886,643 956,617', '#0d760d', 4);
  s += poly('42,650 62,650 120,604 145,618 180,648 196,650 220,644 295,636 318,619 355,630 420,630 455,638 500,628 545,640 586,646 611,630 656,628 681,640 726,633 776,628 798,636 856,622 886,633 916,645 956,620', '#a51010', 4);
  s += line(24, 698, 1000, 698, '#c11', 'stroke-width="3" stroke-dasharray="4 5"') + line(24, 740, 1000, 740, '#22c', 'stroke-width="3" stroke-dasharray="4 5"');
  [[717, 768], [717, 770], [717, 738], [714, 719], [717, 722], [717, 736], [717, 738], [717, 738], [717, 743], [717, 735], [717, 732], [717, 725], [717, 729], [717, 729], [714, 718], [711, 719], [711, 718], [707, 718], [705, 718], [712, 718], [717, 720], [717, 728], [717, 735], [717, 738], [717, 725], [716, 719], [717, 732], [717, 741], [717, 750], [717, 730], [717, 726], [717, 728], [717, 732], [717, 746], [717, 744], [717, 740], [717, 738], [717, 725], [708, 718], [708, 718], [699, 719], [690, 719], [693, 719], [705, 719], [716, 720], [717, 725], [717, 723], [717, 722]].forEach((b, i) => {
    s += rect(36 + i * 19.430, b[0], 12, b[1] - b[0], '#8d8d8d');
  });
  s += text(24, 600, 'DmTr', cyan) + text(24, 692, 'DmTrOsc', cyan);

  // frame and axis
  s += line(18, 64, 1004, 64, cyan) + line(20, 62, 20, 787, cyan);
  s += line(18, 577, 1004, 577, '#2fe0e4') + line(18, 671, 1004, 671, '#2fe0e4') + line(18, 787, 1004, 787, cyan) + line(1004, 62, 1004, 787, cyan);
  [['94.50', 95], ['94.45', 260], ['94.40', 426]].forEach(t => { s += text(1132, t[1], t[0], cyan, '', 'text-anchor="end"'); });
  s += rect(1005, 473, 134, 26, '#0f0') + text(1134, 494, '94.38', '#063', '', 'text-anchor="end"');
  [['250', 605], ['150', 649], ['50', 704], ['-50', 746], ['-100', 766]].forEach(t => { s += text(1104, t[1], t[0], cyan, '', 'text-anchor="end"'); });
  s += rect(1005, 602, 134, 26, '#0b8c0b') + rect(1005, 628, 134, 4, '#c11') + text(1134, 623, '212.2', '#fff', '', 'text-anchor="end"');
  s += rect(1005, 707, 134, 25, '#777') + text(1134, 728, '-8.4', '#fff', '', 'text-anchor="end"');
  [[256, '29-12:34'], [489, '29-12:36'], [722, '29-12:38']].forEach(t => { s += line(t[0], 787, t[0], 815, cyan) + text(t[0] + 4, 809, t[1], cyan); });
  byId('barChart').innerHTML = s;
}

// Trade tape for the spread
function drawTape() {
  let s = rect(18, 70, 867, 7, '#e01010') + rect(18, 323, 867, 7, '#e01010') + rect(18, 174, 867, 54, '#4b4b4b') + rect(888, 174, 115, 54, '#6a6a6a');
  [103, 125, 149, 253, 277, 300].forEach(y => { s += line(18, y, 885, y, '#333', 'stroke-width="2" stroke-dasharray="14 5"'); });
  s += line(18, 201, 885, 201, '#bbb') + line(888, 201, 1003, 201, '#999');

  const box = (x, y, n, on, dim) => rect(x - (n.length > 1 ? 18 : 12), y - 12, n.length > 1 ? 36 : 24, 24, dim) + text(x, y + 11, n, on, 'num', 'text-anchor="middle"');
  [[42, 188, '5'], [78, 188, '3'], [113, 161, '4'], [148, 188, '3'], [184, 161, '1'], [633, 161, '2'], [802, 188, '2']].forEach(b => { s += box(b[0], b[1], b[2], '#f21414', '#6b0808'); });
  [[216, 136, '1'], [373, 136, '2'], [433, 136, '3'], [558, 136, '2']].forEach(b => { s += box(b[0], b[1], b[2], '#a51515', '#4e0b0b'); });
  s += box(595, 114, '10', '#6d1010', '#350606');
  s += box(280, 266, '6', '#0d8a0d', '#063806') + box(672, 266, '13', '#0fa60f', '#064506');
  s += box(495, 215, '3', '#1dff1d', '#0a7a0a') + box(740, 240, '3', '#1dff1d', '#0a7a0a');
  [[346, 161, '2', 373], [406, 161, '3', 433], [531, 161, '2', 558]].forEach(b => {
    s += poly(`${b[0] - 12},${b[1]} ${b[3]},${b[1]} ${b[3]},148`, '#c11', 3) + text(b[0], b[1] + 11, b[2], '#ccc', 'thin', 'text-anchor="middle"');
  });
  s += poly('453,240 495,240 495,227', '#1dff1d', 3) + text(467, 251, '3', '#ccc', 'thin', 'text-anchor="middle"');
  s += poly('697,214 740,214 740,228', '#1dff1d', 3) + text(709, 225, '3', '#ccc', 'thin', 'text-anchor="middle"');
  [[248, 214, '1', '#c22'], [311, 214, '1', '#c22'], [838, 160, '1', '#2c2'], [870, 136, '3', '#185a18'], [770, 266, '3', '#6b2020']].forEach(b => {
    s += line(b[0] - 14, b[1], b[0] + 14, b[1], '#999', 'stroke-width="2"') + text(b[0], b[1] + 10, b[2], b[3], 'med', 'text-anchor="middle"');
  });

  const right = [338, 257, 374, 263, 68], left = ['73', '144', '517', '291', '307'];
  for (let i = 0; i < 10; i++) {
    const y = 100 + i * 24.800;
    s += text(1000, y, (1.15 - i * 0.01).toFixed(2), i === 4 ? '#1dff1d' : '#fff', 'med', 'text-anchor="end"');
    if (i < 5) s += text(1134, y - 4, right[i], i === 4 ? '#d11' : '#777', 'sans', 'text-anchor="end"');
    else s += text(1006, y + 3, left[i - 5], i === 5 ? '#0a9a0a' : '#777', 'sans');
  }
  byId('tape').innerHTML = s;
}

// Forward curve
function drawForward() {
  let s = '';
  const months = ['X14', 'Z14', 'F15', 'G15', 'H15', 'J15', 'K15', 'M15', 'N15', 'Q15', 'U15', 'V15'];
  const now = [182, 246, 287, 318, 345, 370, 392, 412, 434, 450, 461, 466];
  const then = [92, 150, 187, 203, 215, 224, 236, 244, 256, 271, 295, 314];
  const xs = months.map((m, i) => 66 + Math.round(i * 82.200));
  const dots = 'stroke-width="3" stroke-dasharray="3 6"';
  [91, 204, 318, 433].forEach((y, i) => {
    s += line(28, y, 1012, y, '#555', dots) + text(1088, y + 7, 96 - i * 2 + '.00', '#dede17', 'sans', 'text-anchor="end"');
  });
  xs.forEach(x => { s += line(x, 78, x, 488, '#555', dots); });
  s += poly(xs.map((x, i) => x + ',' + then[i]).join(' '), '#39415f', 4) + poly(xs.map((x, i) => x + ',' + now[i]).join(' '), '#1fe6e6', 5);
  xs.forEach((x, i) => { s += rect(x - 3, then[i] - 3, 6, 6, '#56608c') + `<circle cx="${x}" cy="${now[i]}" r="6" fill="#2ff"/>`; });
  s += text(36, 108, '-1M', '#56608c', 'sans') + text(84, 108, 'Current', '#1fe6e6', 'sans');
  s += `<rect x="26" y="417" width="168" height="72" fill="#000" stroke="#888" stroke-width="3"/>`;
  s += text(32, 438, 'CLEX4', '#dede17', 'sans') + text(32, 461, 'Current', '#1fe6e6', 'sans') + text(190, 461, '94.38', '#1fe6e6', 'sans', 'text-anchor="end"');
  s += text(32, 485, '-1M', '#56608c', 'sans') + text(190, 485, '95.84', '#56608c', 'sans', 'text-anchor="end"');
  [489, 507, 534].forEach(y => { s += line(26, y, 1012, y, '#aaa'); });
  months.forEach((m, i) => {
    s += line(107 + i * 82.200, 489, 107 + i * 82.200, 534, '#aaa') + text(xs[i], 527, m, '#dede17', 'month', 'text-anchor="middle"');
  });
  s += line(1012, 76, 1012, 534, '#aaa') + rect(26, 535, 1069, 4, '#8a8a8a') + rect(480, 535, 74, 4, '#000') + rect(511, 535, 10, 4, '#fff');
  byId('forward').innerHTML = s;
}

drawBars();
drawTape();
drawForward();
```
